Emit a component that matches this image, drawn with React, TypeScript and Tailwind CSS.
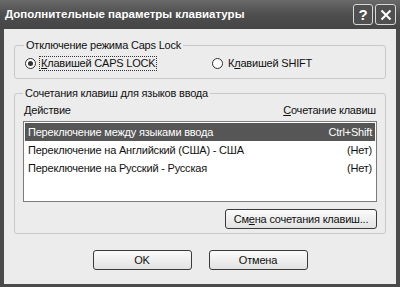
import type { ReactNode } from 'react';

const font = { fontFamily: '"Liberation Sans", Arial, sans-serif' };

function Radio({ checked, children }: { checked?: boolean; children: ReactNode }) {
  return (
    <div className="flex items-center gap-[3px]">
      <span className="flex h-[11px] w-[11px] items-center justify-center rounded-full border border-[#2e2e2e] bg-white">
        {checked && <span className="h-[5px] w-[5px] rounded-full bg-[#333]" />}
      </span>
      <span
        className={
          checked
            ? 'border border-dotted border-[#333] px-[1px] leading-[13px]'
            : 'border border-transparent px-[1px] leading-[13px]'
        }
      >
        {children}
      </span>
    </div>
  );
}

function XpButton({ children, className = '' }: { children: ReactNode; className?: string }) {
  return (
    <button
      className={`flex h-[20px] items-center justify-center rounded-[3px] border border-[#3a3a3a] bg-gradient-to-b from-[#fbfbfb] to-[#e2e2e2] text-[11px] tracking-[-0.2px] text-[#111] ${className}`}
    >
      {children}
    </button>
  );
}

const rows = [
  { action: 'Переключение между языками ввода', keys: 'Ctrl+Shift' },
  { action: 'Переключение на Английский (США) - США', keys: '(Нет)' },
  { action: 'Переключение на Русский - Русская', keys: '(Нет)' },
];

export default function App() {
  return (
    <div
      className="flex h-[287px] w-[400px] flex-col bg-[#4a4a4a] text-[11px] tracking-[-0.2px] text-[#111]"
      style={font}
    >
      {/* Title bar */}
      <div className="flex h-[29px] items-center bg-gradient-to-b from-[#6a6a6a] via-[#4e4e4e] to-[#454545] pl-[5px] pr-[4px]">
        <span className="flex-1 text-[11.5px] font-bold tracking-[0px] text-white">
          Дополнительные параметры клавиатуры
        </span>
        <div className="flex gap-[2px]">
          <span className="flex h-[21px] w-[20px] items-center justify-center rounded-[3px] border border-[#d8d8d8] bg-[#505050] text-[15px] font-bold leading-none text-white">
            ?
          </span>
          <span className="flex h-[21px] w-[21px] items-center justify-center rounded-[3px] border border-[#d8d8d8] bg-[#505050]">
            <svg width="12" height="12" viewBox="0 0 12 12">
              <path d="M1.5 1.5 L10.5 10.5 M10.5 1.5 L1.5 10.5" stroke="white" strokeWidth="2" />
            </svg>
          </span>
        </div>
      </div>

      {/* Body */}
      <div className="mx-[4px] mb-[3px] flex flex-1 flex-col bg-[#ececec] px-[10px]">
        <fieldset className="mt-[10px] h-[40px] rounded-[3px] border border-[#c9c9c9] px-[9px]">
          <legend className="px-[2px] leading-[13px]">Отключение режима Caps Lock</legend>
          <div className="mt-[4px] flex">
            <div className="w-[188px] pl-[1px]">
              <Radio checked>
                <u>К</u>лавишей CAPS LOCK
              </Radio>
            </div>
            <Radio>
              К<u>л</u>авишей SHIFT
            </Radio>
          </div>
        </fieldset>

        <fieldset className="mt-[8px] h-[147px] rounded-[3px] border border-[#c9c9c9] px-[8px]">
          <legend className="px-[2px] leading-[13px]">Сочетания клавиш для языков ввода</legend>
          <div className="mt-[4px] flex justify-between px-[1px] leading-[13px]">
            <span>Действие</span>
            <span>
              <u>С</u>очетание клавиш
            </span>
          </div>
          <div className="mt-[4px] h-[81px] border border-[#7c7c7c] bg-white p-[1px]">
            {rows.map((row, i) => (
              <div
                key={row.action}
                className={
                  i === 0
                    ? 'flex h-[18px] items-center justify-between bg-[#565656] px-[3px] text-white'
                    : 'flex h-[18px] items-center justify-between px-[3px]'
                }
              >
                <span>{row.action}</span>
                <span>{row.keys}</span>
              </div>
            ))}
          </div>
          <div className="mt-[7px] flex justify-end">
            <XpButton className="w-[152px]">
              См<u>е</u>на сочетания клавиш...
            </XpButton>
          </div>
        </fieldset>

        <div className="mt-[16px] flex justify-center gap-[17px]">
          <XpButton className="w-[99px]">OK</XpButton>
          <XpButton className="w-[99px]">Отмена</XpButton>
        </div>
      </div>
    </div>
  );
}
